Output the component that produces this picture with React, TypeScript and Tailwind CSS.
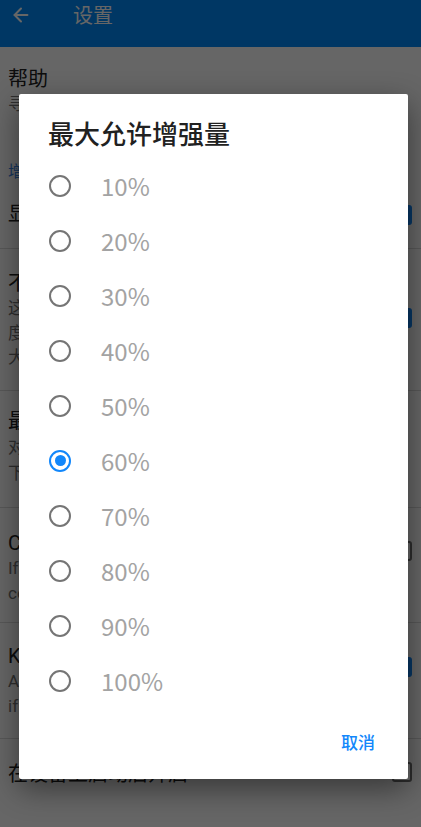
import React from "react";
import { ArrowLeft } from "lucide-react";

const font = { fontFamily: '"Noto Sans CJK SC", "Noto Sans", Roboto, sans-serif' };

function Check({ on }: { on: boolean }) {
  return on ? (
    <div className="w-[20px] h-[20px] rounded-[3px] bg-[#1287fb] flex items-center justify-center">
      <svg width="16" height="16" viewBox="0 0 24 24" fill="none" stroke="#fff" strokeWidth="3">
        <path d="M5 12l5 5 9-10" />
      </svg>
    </div>
  ) : (
    <div className="w-[20px] h-[20px] rounded-[3px] border-[2px] border-[#707070]" />
  );
}

const options = ["10%", "20%", "30%", "40%", "50%", "60%", "70%", "80%", "90%", "100%"];

export default function App() {
  return (
    <div className="relative w-[421px] h-[827px] overflow-hidden bg-white" style={font}>
      {/* App bar */}
      <div className="h-[47px] bg-[#0089f9] pt-[3px]">
        <div className="h-[24px] flex items-center text-white">
          <ArrowLeft size={22} strokeWidth={2.2} className="ml-[10px]" />
          <span className="ml-[41px] text-[20px] leading-[24px]">设置</span>
        </div>
      </div>

      {/* Settings list */}
      <div className="flex flex-col text-[#212121]">
        <div className="h-[88px] px-[8px] pt-[17px]">
          <div className="text-[20px] leading-[28px]">帮助</div>
          <div className="text-[17px] leading-[22px] text-[#757575]">寻求帮助与反馈问题</div>
        </div>
        <div className="h-[55px] px-[8px] pt-[24px]">
          <div className="text-[16px] leading-[22px] text-[#3a86e6]">增强设置</div>
        </div>
        <div className="h-[59px] px-[8px] pt-[10px] border-b border-[#dcdcdc] flex justify-between">
          <div className="text-[20px] leading-[26px]">显示增强效果通知</div>
          <div className="mt-[5px] mr-[1px]"><Check on={true} /></div>
        </div>
        <div className="h-[142px] pl-[8px] pr-[9px] pt-[20px] border-b border-[#dcdcdc] flex justify-between">
          <div>
            <div className="text-[20px] leading-[26px]">不使用系统音量限制</div>
            <div className="text-[17px] leading-[24.5px] text-[#757575]">
              <div>这会让输出的音量超过系统允许的</div>
              <div>度，可能损坏扬声器或者耳机，请</div>
              <div>大家谨慎使用此选项</div>
            </div>
          </div>
          <div className="mt-[39px]"><Check on={true} /></div>
        </div>
        <div className="h-[117px] px-[8px] pt-[16px] border-b border-[#dcdcdc]">
          <div className="text-[20px] leading-[26px]">最大允许增强量</div>
          <div className="text-[17px] leading-[26px] text-[#757575]">
            <div>对音量增强的上限进行限制</div>
            <div>下次启动应用时生效</div>
          </div>
        </div>
        <div className="h-[115px] pl-[8px] pr-[9px] pt-[22px] border-b border-[#dcdcdc] flex justify-between">
          <div>
            <div className="text-[20px] leading-[26px]" style={{ fontFamily: "Roboto, sans-serif" }}>Compatibility mode</div>
            <div className="text-[17px] leading-[25px] text-[#757575]" style={{ fontFamily: "Roboto, sans-serif" }}>
              <div>If the boost does not work, try to</div>
              <div>compatibility mode</div>
            </div>
          </div>
          <div className="mt-[11px]"><Check on={false} /></div>
        </div>
        <div className="h-[116px] pl-[8px] pr-[9px] pt-[20px] border-b border-[#dcdcdc] flex justify-between">
          <div>
            <div className="text-[20px] leading-[26px]" style={{ fontFamily: "Roboto, sans-serif" }}>Keep running</div>
            <div className="text-[17px] leading-[25px] text-[#757575]" style={{ fontFamily: "Roboto, sans-serif" }}>
              <div>Avoid being closed by the system</div>
              <div>if possible</div>
            </div>
          </div>
          <div className="mt-[14px]"><Check on={true} /></div>
        </div>
        <div className="pl-[8px] pr-[9px] pt-[21px] flex justify-between">
          <div className="text-[20px] leading-[26px]">在设备上启动后开启</div>
          <div className="mt-[2px]"><Check on={false} /></div>
        </div>
      </div>

      {/* Scrim + dialog */}
      <div className="absolute inset-0 bg-black/60 pl-[19px] pt-[94px]">
        <div className="w-[389px] h-[685px] bg-white rounded-[2px] shadow-[0_10px_30px_rgba(0,0,0,0.45)] flex flex-col">
          <div className="pl-[29px] pt-[24px] text-[26px] leading-[30px] font-medium text-[#212121]">
            最大允许增强量
          </div>
          <div className="mt-[10px] flex flex-col">
            {options.map((o) => {
              const sel = o === "60%";
              return (
                <div key={o} className="h-[55px] flex items-center pl-[30px]">
                  {sel ? (
                    <div className="w-[22px] h-[22px] rounded-full border-[2.5px] border-[#1287fb] flex items-center justify-center">
                      <div className="w-[11px] h-[11px] rounded-full bg-[#1287fb]" />
                    </div>
                  ) : (
                    <div className="w-[22px] h-[22px] rounded-full border-[2.5px] border-[#757575]" />
                  )}
                  <span className="ml-[30px] text-[24px] leading-[30px] text-[#a3a3a3]">{o}</span>
                </div>
              );
            })}
          </div>
          <div className="mt-[16px] flex justify-end pr-[33px]">
            <span className="h-[36px] flex items-center text-[17px] font-medium text-[#1287fb]">取消</span>
          </div>
        </div>
      </div>
    </div>
  );
}
